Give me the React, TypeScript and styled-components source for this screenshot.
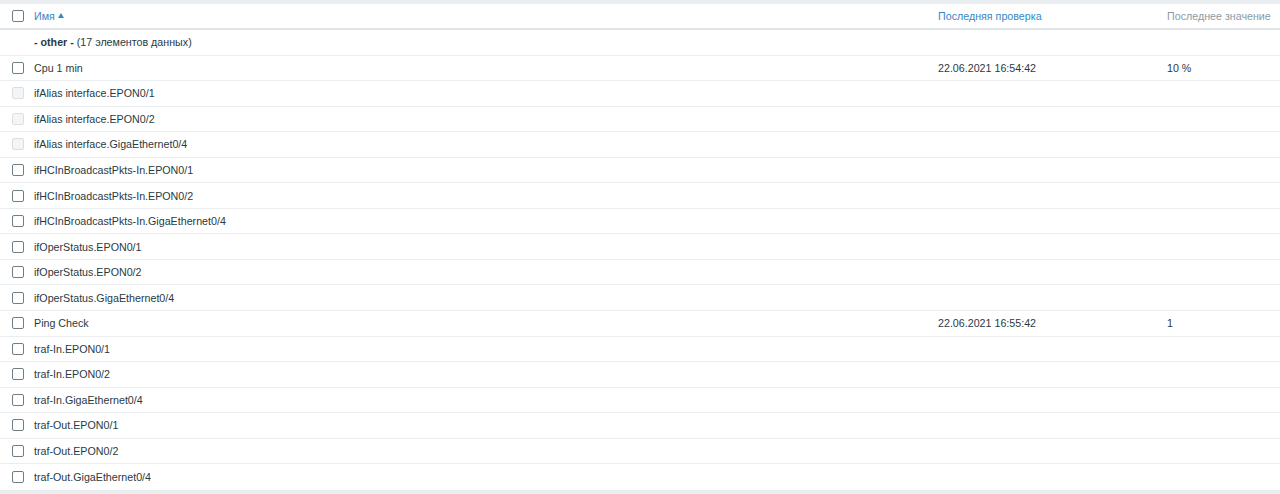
import React from "react";
import styled, { createGlobalStyle } from "styled-components";

const Global = createGlobalStyle`
  html, body { margin: 0; padding: 0; background: #ebeef0; }
  body { font-family: "Liberation Sans", Arial, sans-serif; font-size: 10.7px; color: #2a3a42; }
`;

const Page = styled.div`
  padding: 4px 0 4px 0;
  background: #ebeef0;
`;

const Table = styled.div`
  background: #ffffff;
  display: flex;
  flex-direction: column;
`;

const Row = styled.div<{ $header?: boolean }>`
  display: grid;
  grid-template-columns: 34px 904px 229px 1fr;
  align-items: center;
  box-sizing: border-box;
  height: ${(p) => (p.$header ? "26px" : "25.55px")};
  border-bottom: ${(p) => (p.$header ? "2px solid #dfe4e7" : "1px solid #ebeef0")};
  &:last-child { border-bottom: none; }
`;

const CheckCell = styled.div`
  display: flex;
  align-items: center;
  padding-left: 12px;
`;

const Box = styled.span<{ $disabled?: boolean }>`
  display: inline-block;
  box-sizing: border-box;
  width: 12px;
  height: 12px;
  border-radius: 2px;
  border: 1px solid ${(p) => (p.$disabled ? "#dcdfe1" : "#6f7d85")};
  background: ${(p) => (p.$disabled ? "#f4f5f6" : "#ffffff")};
`;

const Cell = styled.div`
  white-space: nowrap;
  overflow: hidden;
`;

const HeadLink = styled.span<{ $muted?: boolean }>`
  color: ${(p) => (p.$muted ? "#8c9aa3" : "#3a86c4")};
  display: inline-flex;
  align-items: center;
  gap: 3px;
`;

const Arrow = styled.span`
  width: 0;
  height: 0;
  border-left: 3.5px solid transparent;
  border-right: 3.5px solid transparent;
  border-bottom: 5px solid #3a86c4;
  margin-top: -1px;
`;

const Bold = styled.b`
  font-weight: bold;
`;

type Item = { name: string; disabled?: boolean; check?: string; value?: string };

const items: Item[] = [
  { name: "Cpu 1 min", check: "22.06.2021 16:54:42", value: "10 %" },
  { name: "ifAlias interface.EPON0/1", disabled: true },
  { name: "ifAlias interface.EPON0/2", disabled: true },
  { name: "ifAlias interface.GigaEthernet0/4", disabled: true },
  { name: "ifHCInBroadcastPkts-In.EPON0/1" },
  { name: "ifHCInBroadcastPkts-In.EPON0/2" },
  { name: "ifHCInBroadcastPkts-In.GigaEthernet0/4" },
  { name: "ifOperStatus.EPON0/1" },
  { name: "ifOperStatus.EPON0/2" },
  { name: "ifOperStatus.GigaEthernet0/4" },
  { name: "Ping Check", check: "22.06.2021 16:55:42", value: "1" },
  { name: "traf-In.EPON0/1" },
  { name: "traf-In.EPON0/2" },
  { name: "traf-In.GigaEthernet0/4" },
  { name: "traf-Out.EPON0/1" },
  { name: "traf-Out.EPON0/2" },
  { name: "traf-Out.GigaEthernet0/4" },
];

export default function App() {
  return (
    <>
      <Global />
      <Page>
        <Table>
          <Row $header>
            <CheckCell><Box /></CheckCell>
            <Cell><HeadLink>Имя <Arrow /></HeadLink></Cell>
            <Cell><HeadLink>Последняя проверка</HeadLink></Cell>
            <Cell><HeadLink $muted>Последнее значение</HeadLink></Cell>
          </Row>
          <Row>
            <CheckCell />
            <Cell><Bold>- other -</Bold> (17 элементов данных)</Cell>
            <Cell />
            <Cell />
          </Row>
          {items.map((it) => (
            <Row key={it.name}>
              <CheckCell><Box $disabled={it.disabled} /></CheckCell>
              <Cell>{it.name}</Cell>
              <Cell>{it.check}</Cell>
              <Cell>{it.value}</Cell>
            </Row>
          ))}
        </Table>
      </Page>
    </>
  );
}
